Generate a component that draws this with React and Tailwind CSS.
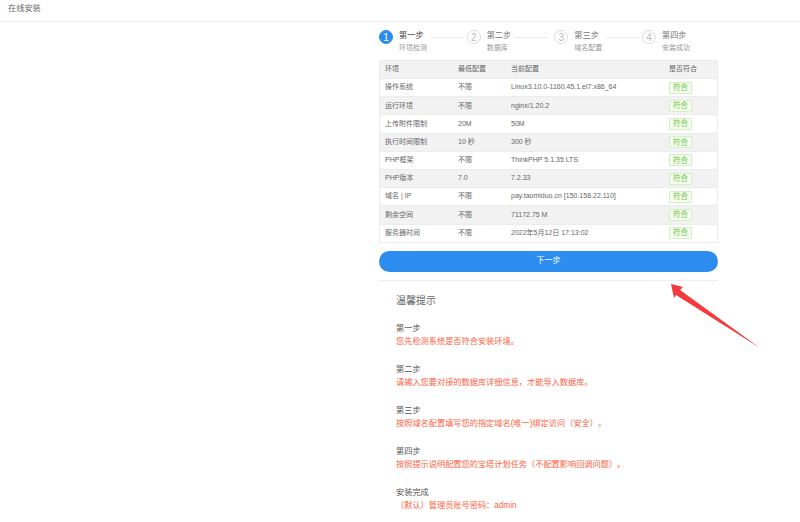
import React from 'react';

const steps = [
  { title: '第一步', sub: '环境检测' },
  { title: '第二步', sub: '数据库' },
  { title: '第三步', sub: '域名配置' },
  { title: '第四步', sub: '安装成功' },
];

const rows = [
  ['操作系统', '不限', 'Linux3.10.0-1160.45.1.el7.x86_64'],
  ['运行环境', '不限', 'nginx/1.20.2'],
  ['上传附件限制', '20M', '50M'],
  ['执行时间限制', '10 秒', '300 秒'],
  ['PHP框架', '不限', 'ThinkPHP 5.1.35 LTS'],
  ['PHP版本', '7.0', '7.2.33'],
  ['域名 | IP', '不限', 'pay.taomiduo.cn [150.158.22.110]'],
  ['剩余空间', '不限', '71172.75 M'],
  ['服务器时间', '不限', '2022年5月12日 17:13:02'],
];

const tips = [
  ['第一步', '您先检测系统是否符合安装环境。'],
  ['第二步', '请输入您要对接的数据库详细信息，才能导入数据库。'],
  ['第三步', '按照域名配置填写您的指定域名(唯一)绑定访问（安全）。'],
  ['第四步', '按照提示说明配置您的宝塔计划任务（不配置影响回调问题）。'],
  ['安装完成', '（默认）管理员账号密码：admin'],
];

// Steps Component
const Steps = () => (
  <div className="flex h-[27px] items-start">
    {steps.map((step, i) => (
      <div key={step.title} className={`flex ${i < 3 ? 'w-[87.67px]' : ''}`}>
        <div
          className={
            i === 0
              ? 'flex h-[14px] w-[14px] shrink-0 items-center justify-center rounded-full border border-[#2d8cf0] bg-[#2d8cf0] text-[10px] text-white'
              : 'flex h-[14px] w-[14px] shrink-0 items-center justify-center rounded-full border border-[#dcdcdc] bg-white text-[10px] text-[#bbb]'
          }
        >
          {i + 1}
        </div>
        <div className="ml-[6px] shrink-0">
          <div className={`flex h-[13px] items-center text-[8.2px] ${i === 0 ? 'text-[#444]' : 'text-[#777]'}`}>
            {step.title}
          </div>
          <div className="mt-[-2px] text-[7px] leading-[13px] text-[#999]">{step.sub}</div>
        </div>
        {i < 3 && <div className="ml-[4px] mt-[7px] h-px w-[33px] shrink-0 bg-[#e8e8e8]" />}
      </div>
    ))}
  </div>
);

// Table Component
const EnvTable = () => (
  <table className="mt-[3px] w-[339px] table-fixed border border-[#ececec] text-[7px] text-[#666]">
    <thead>
      <tr className="h-[18px] bg-[#f2f2f2]">
        <th className="w-[78.5px] pl-[5px] text-left font-normal">环境</th>
        <th className="w-[53px] text-left font-normal">最低配置</th>
        <th className="w-[158px] text-left font-normal">当前配置</th>
        <th className="text-left font-normal">是否符合</th>
      </tr>
    </thead>
    <tbody>
      {rows.map((row, i) => (
        <tr key={row[0]} className={`h-[18.2px] border-t border-[#ececec] ${i % 2 === 1 ? 'bg-[#f2f2f2]' : 'bg-white'}`}>
          <td className="pl-[5px]">{row[0]}</td>
          <td>{row[1]}</td>
          <td>{row[2]}</td>
          <td>
            <span className="flex h-[12px] w-[23px] items-center justify-center rounded-[1px] border border-[#d2f0c2] bg-[#f5fcf0] text-[7.5px] text-[#72c944]">
              符合
            </span>
          </td>
        </tr>
      ))}
    </tbody>
  </table>
);

// Tips Component
const Tips = () => (
  <div className="pl-[17px] [font-kerning:none] [text-spacing-trim:space-all]">
    <div className="mt-[14px] text-[10px] leading-[12px] text-[#666]">温馨提示</div>
    <div className="mt-[15px] flex flex-col gap-[15px]">
      {tips.map((tip) => (
        <div key={tip[0]} className="text-[8.2px] leading-[13px]">
          <div className="text-[#555]">{tip[0]}</div>
          <div className="text-[#ff6242]">{tip[1]}</div>
        </div>
      ))}
    </div>
  </div>
);

// Annotation arrow drawn on the screenshot
const Arrow = () => (
  <svg className="absolute left-0 top-0" width="800" height="522">
    <polygon points="671,284 683,287 680,290 760,348 676,295 674,298" fill="#f5393d" />
  </svg>
);

const App = () => (
  <div
    className="relative h-[522px] w-[800px] overflow-hidden bg-white"
    style={{ fontFamily: '"Liberation Sans", "Noto Sans CJK SC", sans-serif' }}
  >
    <div className="flex h-[22px] items-center border-b border-[#f2f2f2] pb-[3px] pl-[8px] text-[8.2px] text-[#666]">
      在线安装
    </div>
    <div className="ml-[379px] w-[339px] pt-[8px]">
      <Steps />
      <EnvTable />
      <button className="mt-[8px] flex h-[21px] w-full items-center justify-center rounded-full bg-[#2d8cf0] text-[8.2px] text-white">
        下一步
      </button>
      <div className="mt-[8px] h-px bg-[#eeeeee]" />
      <Tips />
    </div>
    <Arrow />
  </div>
);

export default App;
